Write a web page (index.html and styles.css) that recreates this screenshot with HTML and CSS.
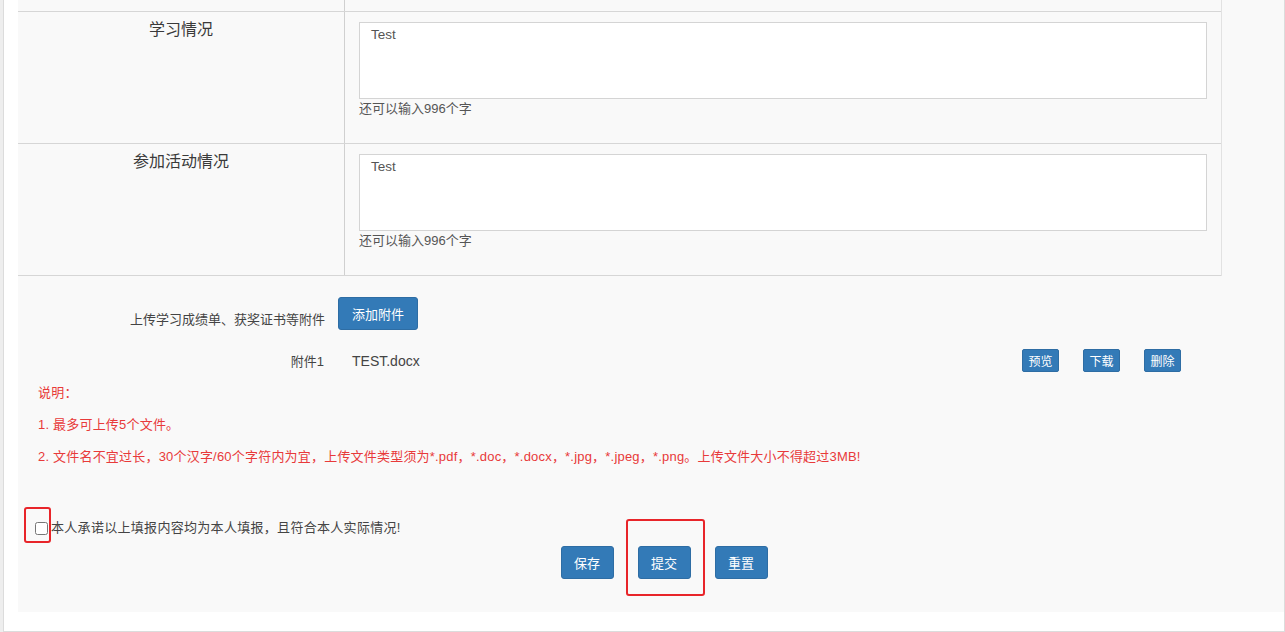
FILE: index.html
```html
<!doctype html>
<html lang="zh-CN">
    <head>
        <meta charset="UTF-8" />
        <meta name="viewport" content="width=device-width, initial-scale=1.0" />
        <title>申请表</title>
        <link rel="stylesheet" href="styles.css">
    </head>
    <body>
        <div class="page">
            <div class="panel">
                <div class="form-table">
                    <div class="form-row partial">
                        <div class="label-cell"></div>
                        <div class="value-cell"></div>
                    </div>
                    <div class="form-row">
                        <div class="label-cell">学习情况</div>
                        <div class="value-cell">
                            <textarea class="text-input">Test</textarea>
                            <div class="counter">还可以输入996个字</div>
                        </div>
                    </div>
                    <div class="form-row">
                        <div class="label-cell">参加活动情况</div>
                        <div class="value-cell">
                            <textarea class="text-input">Test</textarea>
                            <div class="counter">还可以输入996个字</div>
                        </div>
                    </div>
                </div>

                <div class="upload">
                    <div class="upload-row">
                        <div class="upload-label">上传学习成绩单、获奖证书等附件</div>
                        <button class="btn btn-add">添加附件</button>
                    </div>
                    <div class="file-row">
                        <div class="file-label">附件1</div>
                        <div class="file-name">TEST.docx</div>
                        <div class="file-actions">
                            <button class="btn btn-sm">预览</button>
                            <button class="btn btn-sm">下载</button>
                            <button class="btn btn-sm">删除</button>
                        </div>
                    </div>
                </div>

                <div class="notes">
                    <p>说明：</p>
                    <p>1. 最多可上传5个文件。</p>
                    <p>2. 文件名不宜过长，30个汉字/60个字符内为宜，上传文件类型须为*.pdf，*.doc，*.docx，*.jpg，*.jpeg，*.png。上传文件大小不得超过3MB!</p>
                </div>

                <label class="promise">
                    <span class="mark-wrap"><input type="checkbox" id="promise" /><span class="mark mark-check"></span></span>本人承诺以上填报内容均为本人填报，且符合本人实际情况!
                </label>

                <div class="actions">
                    <button class="btn btn-main">保存</button>
                    <span class="mark-wrap"><button class="btn btn-main">提交</button><span class="mark mark-submit"></span></span>
                    <button class="btn btn-main">重置</button>
                </div>
            </div>
        </div>
    </body>
</html>
```

FILE: styles.css
```css
body {
    margin: 0;
    background-color: #eeeeee;
    font-family: "Liberation Sans", "Noto Sans CJK SC", sans-serif;
    font-size: 13px;
    color: #333;
}
.page {
    margin-left: 3px;
    height: 632px;
    background-color: #fff;
    border: 1px solid #dcdcdc;
    border-top: none;
    padding: 0 0 0 14px;
    box-sizing: border-box;
}
.panel {
    background-color: #f9f9f9;
    height: 612px;
}
.form-table {
    width: 1204px;
    border-right: 1px solid #e2e2e2;
    box-sizing: border-box;
}
.form-row {
    display: flex;
    height: 132px;
    border-bottom: 1px solid #d6d6d6;
    box-sizing: border-box;
}
.form-row.partial {
    height: 12px;
}
.label-cell {
    width: 327px;
    border-right: 1px solid #d0d0d0;
    box-sizing: border-box;
    text-align: center;
    font-size: 16px;
    line-height: 16px;
    padding-top: 10px;
    color: #3a3a3a;
}
.value-cell {
    flex: 1;
    padding: 10px 14px 0 14px;
}
.text-input {
    display: block;
    width: 100%;
    height: 77px;
    box-sizing: border-box;
    border: 1px solid #d4d4d4;
    background-color: #fff;
    padding: 4px 11px;
    font-family: "Liberation Sans", "Noto Sans CJK SC", sans-serif;
    font-size: 13.5px;
    line-height: 16px;
    color: #555;
    resize: none;
}
.counter {
    line-height: 20px;
    color: #555;
}
.btn {
    background-color: #337ab7;
    border: 1px solid #2e6da4;
    border-radius: 3px;
    color: #fff;
    font-family: "Noto Sans CJK SC", sans-serif;
    cursor: pointer;
    padding: 0;
}
.upload {
    width: 1204px;
    padding-top: 21px;
}
.upload-row {
    display: flex;
    align-items: flex-start;
}
.upload-label {
    width: 307px;
    text-align: right;
    padding-top: 13px;
    line-height: 20px;
    color: #444;
}
.btn-add {
    margin-left: 13px;
    width: 80px;
    height: 33px;
    font-size: 13px;
}
.file-row {
    display: flex;
    align-items: center;
    margin-top: 19px;
    height: 23px;
    padding-right: 41px;
}
.file-label {
    width: 306px;
    text-align: right;
    color: #444;
}
.file-name {
    margin-left: 28px;
    font-size: 14px;
    color: #444;
}
.file-actions {
    margin-left: auto;
    display: flex;
    gap: 24px;
}
.btn-sm {
    width: 37px;
    height: 23px;
    font-size: 12px;
    border-radius: 2px;
}
.notes {
    padding-left: 20px;
    margin-top: 11px;
    color: #e83a3a;
    letter-spacing: 0.2px;
}
.notes p {
    margin: 0 0 12px;
    line-height: 20px;
}
.promise {
    display: flex;
    align-items: center;
    margin-top: 51px;
    padding-left: 13px;
    line-height: 20px;
    color: #444;
    letter-spacing: 0.3px;
}
.promise input {
    margin: 3px 3px 3px 4px;
    width: 13px;
    height: 13px;
}
.mark-wrap {
    position: relative;
    display: inline-flex;
}
.mark {
    position: absolute;
    border: 2px solid #e8252a;
    border-radius: 3px;
    pointer-events: none;
}
.mark-check {
    left: -7px;
    right: 0;
    top: -12px;
    bottom: -5px;
}
.mark-submit {
    left: -12px;
    right: -14px;
    top: -27px;
    bottom: -17px;
}
.actions {
    display: flex;
    justify-content: center;
    gap: 24px;
    margin-top: 8px;
    padding-left: 26px;
}
.btn-main {
    width: 53px;
    height: 33px;
    font-size: 13px;
}
```
